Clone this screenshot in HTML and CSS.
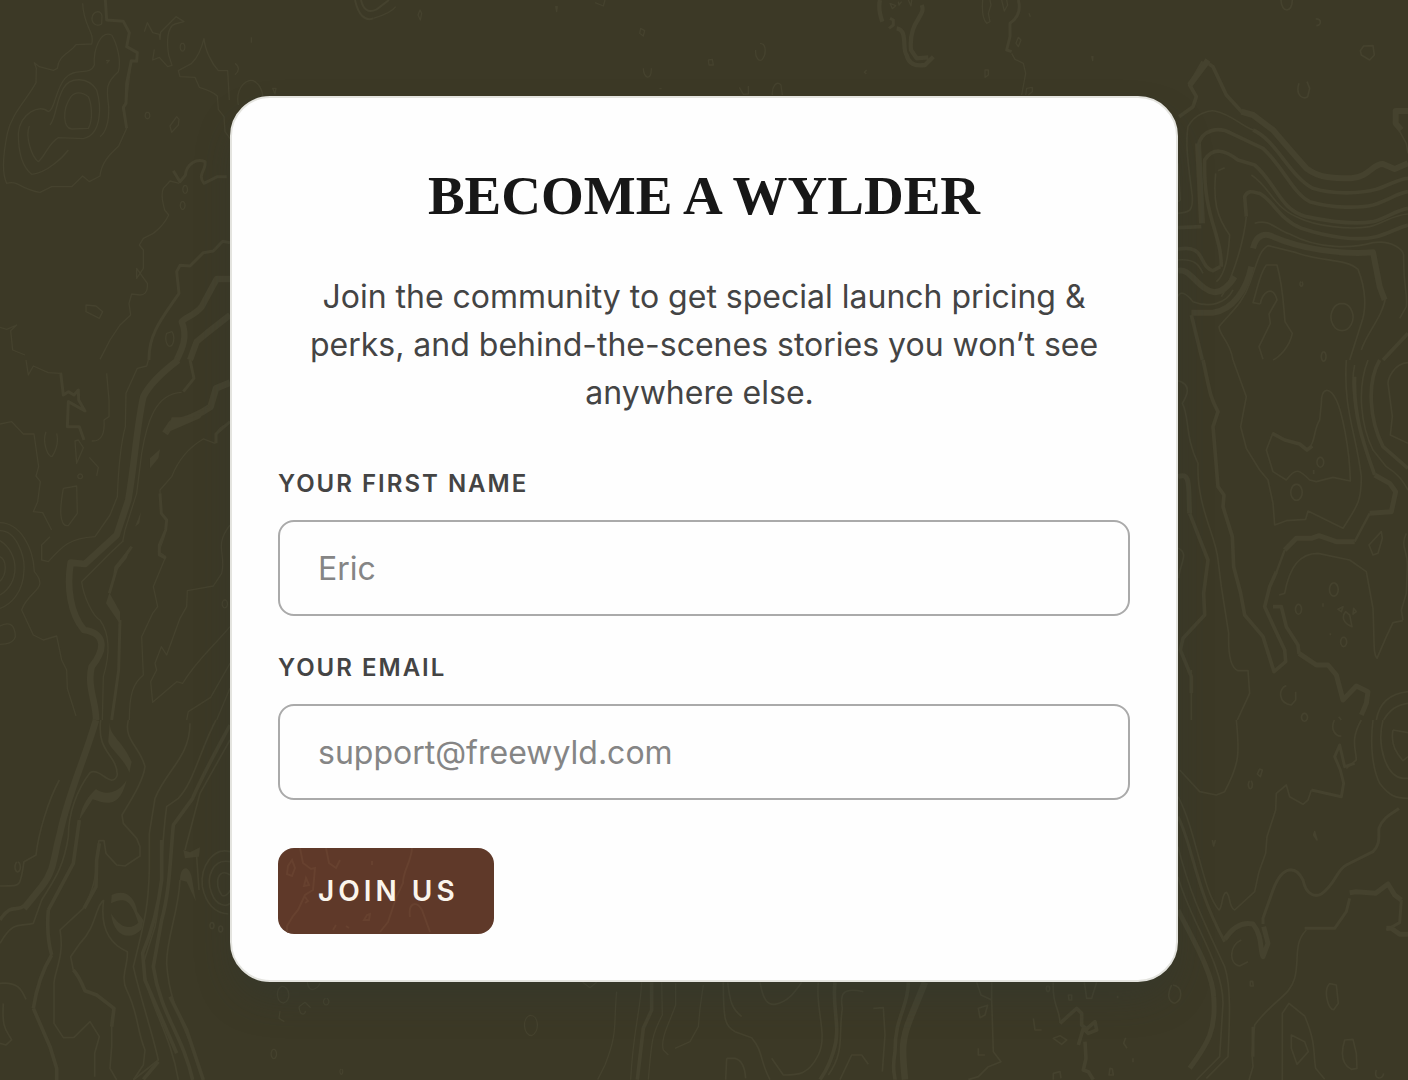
FILE: index.html
```html
<!DOCTYPE html>
<html lang="en">
<head>
<meta charset="utf-8">
<meta name="viewport" content="width=device-width, initial-scale=1">
<title>Become a Wylder</title>
<link rel="stylesheet" href="styles.css">
</head>
<body>
<svg class="contours" viewBox="0 0 1408 1080" preserveAspectRatio="xMidYMid slice" aria-hidden="true">
  <!-- west side, from north to south -->
  <g transform="scale(.33333)">
    <g stroke-width="4">
      <path d="M248 10C250 80 285 95 275 132L228 134C210 160 175 165 172 205L160 211L118 200L103 188L109 205L108 248C80 300 35 340 22 400C10 460 5 520 20 550Q35 545 50 551Q95 575 120 577L155 560L215 560L248 528L268 545L300 528C305 480 340 455 356 438L380 385L368 322L380 300L394 180"/>
      <path d="M335 105C300 90 280 150 283 195C270 230 225 200 195 235C165 270 165 330 145 335C120 310 60 340 55 400C55 450 65 500 95 523C140 520 190 470 205 450"/>
      <path d="M335 105C350 130 365 180 355 215C315 250 320 270 326 320C328 370 315 400 300 410"/>
      <path d="M88 378C75 410 95 470 115 485C135 470 145 430 175 413L250 416C305 405 305 320 290 270C265 230 210 230 190 265C165 310 170 350 150 375"/>
      <path d="M213 290C185 330 190 385 215 387L265 385C280 360 275 310 265 290C245 275 225 275 213 290Z"/>
      <path d="M276 54C280 30 305 30 306 48L305 72C290 82 275 70 276 54ZM318 182L328 181L320 190"/>
      <path d="M433 95L442 68L458 98L478 103L480 118L482 97L528 50L552 65L525 72C500 80 500 130 506 165L516 196L503 200L478 172L458 180L463 148"/>
      <path d="M545 130A7 12 0 1 0 550 130ZM440 337A7 10 0 1 0 445 337ZM510 378L530 350L537 358L535 375L515 397Z"/>
      <path d="M612 115Q600 165 575 190L535 212L540 230L585 232L598 262Q640 275 652 288L655 328L672 350L675 395L692 418M612 115C615 150 635 190 655 212H683L688 300"/>
      <path d="M538 550L510 543L490 565C480 590 490 610 494 630L506 645C490 680 465 695 460 700L430 715L418 735L430 750V805L410 835V805L442 850C445 880 430 885 420 885L395 882L387 910L392 945L360 975L330 1020L300 1078"/>
      <path d="M553 557A7 12 0 1 0 558 557ZM546 605A7 12 0 1 0 550 605ZM500 1000A12 24 0 1 0 516 995ZM258 915L288 918L308 935L298 955L258 935Z"/>
      <path d="M0 982L20 988L50 975L32 992L38 1050L75 1065"/>
    </g>
    <g stroke-width="9">
      <path d="M316 0L320 60L370 64L388 98L380 140L412 158L410 184L394 182L380 250L378 310L370 322L380 385"/>
      <path d="M690 728L668 724L640 753L610 758L570 798L540 796L530 815L537 880C490 950 445 1000 447 1080"/>
      <path d="M520 512L540 545L556 526C560 490 590 475 615 485C620 510 590 525 612 550L652 530L680 530"/>
    </g>
    <g stroke-width="19">
      <path d="M690 837H650L632 870L605 920C585 945 560 950 545 965C565 1010 545 1050 530 1080"/>
      <path d="M690 945L620 1000L590 1025L570 1080"/>
    </g>
  </g>
  <g transform="translate(0 360) scale(.33333)">
    <g stroke-width="4">
      <path d="M445 0L440 18L412 25L378 100L376 200C360 260 355 330 352 410L330 465L285 530C210 535 190 555 145 605L125 600V555L150 530"/>
      <path d="M0 192L35 185L70 222H102L116 320L108 348L121 365L113 425L100 455L128 458L155 510"/>
      <path d="M78 0L85 45L100 18L145 38L180 40M320 40L327 120V170L312 180C315 220 305 245 275 243"/>
      <path d="M138 215C125 250 145 290 156 290C175 260 175 240 170 220M225 243L230 310L250 263L235 240ZM190 385L230 378L232 460L205 497C175 500 180 440 190 385M268 292L295 322L290 348M240 342A7 7 0 1 0 241 342Z"/>
      <path d="M0 488C60 490 100 560 103 635C150 690 85 690 65 750L100 825L130 840L170 828L185 900L200 930L202 985L228 1068"/>
      <path d="M0 512C50 512 75 590 72 630C70 700 30 735 0 745M0 542C60 580 60 670 0 705M0 590C20 600 22 640 0 664M0 798C25 785 45 790 46 830C40 850 20 852 0 853"/>
      <path d="M370 542L330 580L245 665C250 710 280 770 300 780C335 830 325 900 310 950L307 1080"/>
      <path d="M545 97C465 100 440 190 425 280L410 400L375 510L368 545M690 190C650 200 650 220 645 250L610 237C570 260 535 300 515 350L480 390L482 460C510 480 500 520 475 575L497 590L460 680L473 740L458 760L425 830L430 945C400 970 388 1000 388 1080"/>
      <path d="M690 495C640 560 680 580 665 640L640 678L562 692L560 740L540 775L500 885L484 860L465 910L470 930L452 965L458 1027L530 965L548 970C590 900 640 860 690 800M672 720A8 12 0 1 0 677 720Z"/>
      <path d="M690 910L632 1012L565 1055L560 1080M690 985L650 1080"/>
    </g>
    <g stroke-width="9">
      <path d="M182 38L190 105L205 95L222 105L235 90L236 120L255 153L205 125L202 200L238 200L252 240"/>
      <path d="M570 0L582 55L550 95M690 185L648 222V250M480 400L484 460L500 480L497 510L478 555V585L498 595M360 780L356 930L335 1080M395 560L350 625L328 700"/>
    </g>
    <g stroke-width="20">
      <path d="M535 0Q455 60 430 110C410 200 405 300 385 420L350 525L255 612L212 608C200 680 210 760 252 810C320 820 315 870 275 920C260 980 290 1030 288 1080"/>
      <path d="M690 68L648 85L632 140C590 170 550 180 515 190L495 220"/>
    </g>
    <path class="fill" d="M480 268L450 295V325L475 295ZM423 455L405 500L418 490ZM393 558L343 620L340 643L380 595ZM328 698L318 730L360 792V755ZM515 172H580L630 135L600 175L500 218Z"/>
  </g>
  <g transform="translate(0 720) scale(.33333)">
    <g stroke-width="5">
      <path d="M302 0C290 100 350 100 352 165C335 210 300 140 270 158C230 210 205 280 205 350C190 450 155 490 125 540L100 610C60 620 40 600 0 670"/>
      <path d="M385 0C370 60 420 80 435 140C430 180 400 230 366 285L370 310L410 355L420 380V408L375 438L350 435L318 400L312 362H297L290 410C290 470 280 510 250 565L180 630C195 710 160 760 162 795V910L190 953L222 952L270 905L298 950L284 1000V1070"/>
      <path d="M570 10C570 110 500 150 465 235L448 340V450C445 550 440 580 400 740C420 830 455 930 475 1020L400 1080"/>
      <path d="M648 0C600 90 580 190 535 235L500 260C480 400 490 500 465 620L430 730C440 850 510 930 535 1080"/>
      <path d="M690 60L600 220L555 390M590 410L597 510M540 480C535 580 500 650 500 730C510 880 570 930 610 1080"/>
      <path d="M311 540C285 560 290 620 240 670L212 710L220 750L260 815M311 540C300 620 325 670 382 695C385 735 360 770 380 810C415 880 410 930 435 990L430 1035L400 1080M335 890V980L330 1045L350 1080"/>
      <path d="M0 498C60 495 60 510 72 425L108 405C115 340 145 240 178 180M0 790C55 785 65 810 78 838M10 850C5 930 20 930 35 960L18 975L0 970M52 426A8 15 0 1 0 54 426"/>
      <path d="M690 395C640 380 600 440 607 500C620 560 650 580 685 582M690 425C640 415 615 470 635 520C650 560 680 560 690 550M690 465C655 440 640 490 665 525C675 535 690 515 690 510M635 608A6 9 0 1 0 637 608ZM661 618A6 9 0 1 0 663 618Z"/>
    </g>
    <g stroke-width="11">
      <path d="M0 600C35 545 50 580 75 555M252 565L288 500L290 420L298 370M220 750Q235 765 255 812L290 825L342 865L335 920M100 865L150 980L170 1045V1080M155 705Q115 770 100 865M145 570C140 630 145 670 155 705M145 570L220 430L238 300"/>
      <path d="M690 15C650 90 600 180 578 235L520 315C510 420 510 510 485 600L460 740C480 880 550 950 578 1080M485 360L485 480Q470 600 428 700L435 780L530 1000M510 830L560 930L610 1080M475 1025L430 1078"/>
    </g>
    <path d="M288 0C250 130 205 220 180 340C160 410 165 450 125 500L72 565" stroke-width="20"/>
    <path class="fill" d="M330 0C325 50 360 50 395 125L388 158C370 110 320 80 325 60ZM288 207C320 230 360 215 380 180C360 260 325 255 278 238L238 300C245 250 270 225 288 207ZM335 525C375 505 405 530 412 575L430 600L425 628C390 665 340 650 333 580C370 640 400 620 415 608C390 530 370 535 333 550ZM550 390L570 397L600 382L597 410L555 415ZM540 480C540 440 565 430 575 470L588 545L560 485Z"/>
  </g>
  <!-- east side -->
  <g transform="translate(1173 0) scale(.33333)">
    <g stroke-width="5">
      <path d="M15 640C45 635 60 640 58 590C50 520 35 440 45 380C65 340 110 330 125 333C180 345 200 375 240 390"/>
      <path d="M180 1080C170 1020 140 1010 138 980C170 940 210 910 230 850C255 780 260 750 285 737L370 758C440 785 520 775 555 808C580 870 580 930 565 970L530 1080"/>
      <path d="M128 520C120 600 130 650 170 705C165 790 150 830 130 845M235 525C290 560 300 620 370 650C430 680 530 690 590 680C640 665 660 645 705 642M135 512L155 503M220 650C210 750 165 860 145 890M180 870C160 910 110 925 60 905C40 880 20 870 15 890"/>
      <path d="M245 670C290 655 310 690 350 702C440 750 540 745 600 728C660 720 690 750 692 765C690 860 705 880 700 920L680 955M638 890C630 950 580 1000 565 1050M262 912L240 908C255 860 260 820 280 795L312 795C330 860 330 900 336 965L358 1000C350 1040 320 1070 300 1080"/>
      <path d="M262 912C265 880 300 850 312 900L288 942L292 970L258 1040L270 1078M500 911A33 41 0 1 0 514 911ZM450 1056A7 14 0 1 0 454 1056ZM384 845A4 7 0 1 0 386 845M324 0C325 40 358 40 358 0M428 57C448 55 445 77 430 77M562 152L572 138L600 137L604 165L590 180L565 165ZM378 250C365 290 395 300 404 290L410 265L402 245M675 385L700 430L705 460M15 490L22 600L15 605M15 780C70 775 80 800 90 820"/>
    </g>
    <g stroke-width="11">
      <path d="M240 390C310 420 350 530 420 565C480 585 570 580 610 568C650 555 680 535 705 535"/>
      <path d="M75 440C85 385 140 380 175 400L270 445C330 500 360 580 410 605C480 625 560 625 600 615C650 600 670 580 705 575"/>
      <path d="M220 650L215 590C225 568 240 576 260 580C300 600 320 660 385 685C460 710 550 725 610 710C650 700 670 685 705 675"/>
      <path d="M145 800C145 700 90 650 95 480C120 440 155 450 195 480L245 495C310 550 320 630 400 650C470 665 540 675 600 665C640 655 670 630 705 625"/>
      <path d="M15 683L85 680M15 748C100 730 75 800 120 812L142 800M55 945L88 1080M705 1000L630 1080M105 190L120 200L160 285L210 340M90 185L50 255L70 290L60 320L18 350"/>
    </g>
    <g stroke-width="18">
      <path d="M105 180L95 195L50 255M205 335L240 345L300 390Q360 460 400 505C440 535 480 535 535 535C590 530 600 490 630 492L665 507L705 490M75 430L87 670M15 813C50 800 75 870 125 877C150 875 170 855 185 830M240 745C250 700 280 700 300 710C380 745 500 765 600 757L620 860L635 900M55 938H120C180 930 220 870 235 800M705 333H668V370L685 390"/>
    </g>
  </g>
  <g transform="translate(1173 360) scale(.33333)">
    <g stroke-width="5">
      <path d="M15 62C60 75 40 110 28 130C50 170 35 230 75 310C70 440 130 530 135 600L145 680L167 820C165 890 175 925 195 932H225L230 1000L193 1080"/>
      <path d="M180 0L220 110L203 200L220 265L260 330L285 360L300 430L305 495L340 482L398 478L405 453L510 505C550 440 565 430 565 350C550 220 510 150 520 0"/>
      <path d="M300 218L280 270L300 335L340 360C370 320 380 330 410 360L430 365L480 352L532 363C530 260 505 150 490 120C470 80 445 80 445 130L440 180C420 210 430 250 400 272"/>
      <path d="M545 15C530 80 550 170 570 240M585 0C550 90 565 200 600 270L640 320C680 345 690 365 705 390M705 8C660 10 645 60 645 70L658 170L652 225L705 250M318 705L335 700C350 620 380 580 435 580L530 600L580 635L600 745C605 860 600 880 612 895L640 830L660 788L690 782"/>
      <path d="M15 565C50 580 20 610 17 655M625 515L588 555L600 585L615 580L628 535ZM700 520C680 560 705 570 703 620L700 700L685 750L690 780M610 1080C620 1020 660 1000 705 995M632 1080C650 1050 670 1035 705 1030M55 930V1080M340 977C315 985 315 1030 355 1035L368 1020V995"/>
      <path d="M440 292A10 15 0 1 0 444 292ZM368 373A17 24 0 1 0 373 373ZM480 669A13 20 0 1 0 485 669ZM375 733A9 15 0 1 0 378 733ZM518 755C505 770 510 790 537 800L530 765ZM495 748L510 740L505 755ZM542 745L550 755L540 762ZM510 832A9 14 0 1 0 514 832ZM393 1060A9 12 0 1 0 396 1060ZM497 1070L505 1080M450 730V740M422 330V342M472 820V826"/>
    </g>
    <g stroke-width="11">
      <path d="M90 0C110 90 110 110 135 155L120 200L135 380L153 405L150 440L178 530L182 620L203 700L215 765L270 830L303 935L338 905L335 870L300 795L275 740L290 680L310 635"/>
      <path d="M298 220L335 240L380 252L402 270L418 258M545 50C540 170 575 260 605 345M620 0C580 70 590 180 630 260L705 325M50 460L105 600L92 700L95 765L30 835L22 870L55 950V1000M300 740H325L340 800L375 855L378 882"/>
    </g>
    <g stroke-width="15">
      <path d="M605 345L650 370L668 395L655 455L590 460M545 545H490L438 527L415 535H370L335 570M378 880L430 915H465L490 945L510 1020L550 978L585 995L580 1030L565 1065M15 350C55 335 45 380 50 460"/>
    </g>
    <path d="M590 460L545 545M335 570L310 638" stroke-width="7"/>
  </g>
  <g transform="translate(1173 720) scale(.33333)">
    <g stroke-width="5">
      <path d="M190 0C200 100 200 130 155 215L130 225L80 215L20 150M15 230C70 330 90 520 138 570C150 560 145 520 160 517C175 530 165 560 185 570L245 515L258 455L278 400L282 350L308 270L310 220L340 195L350 230L390 253L405 240L415 210"/>
      <path d="M400 630C360 670 380 720 365 775C350 830 300 840 245 915L237 1000L240 1040L228 1080"/>
      <path d="M600 0C590 80 600 150 620 190C650 230 670 235 705 235M630 0C610 80 640 170 690 175H705M660 30C650 80 680 110 690 122L705 110M660 30L705 38M565 0C530 60 550 90 550 120L520 145"/>
      <path d="M15 380C50 520 90 600 155 740C175 800 170 900 165 1010L100 1075M15 470C50 600 150 730 150 850L140 1010L70 1080M205 660C170 675 165 730 200 738L225 725M232 784V798H241L239 784ZM328 1080V880L348 850L395 888C430 970 420 1000 428 1045L455 1078M355 945L395 965L406 995L372 1033L355 985ZM470 791C450 810 465 870 482 869L496 850L490 795ZM515 960C500 1010 510 1035 535 1048L552 1045L550 1000L540 958ZM610 1050C600 1080 630 1080 632 1060M260 147L253 162L262 170L268 150ZM230 183A6 12 0 1 0 234 183M425 335L432 360L422 345ZM0 795C30 800 30 840 5 850M118 360L122 378L127 360M484 0C470 30 490 50 505 48"/>
    </g>
    <g stroke-width="9">
      <path d="M270 612V595L300 510C330 430 370 440 390 480C400 530 430 530 445 522C490 490 490 450 520 435L600 395C625 370 615 345 618 325C630 290 660 280 678 265"/>
      <path d="M415 210L505 230L512 190L502 150L485 110L500 75L515 140L545 130M530 535L520 575L485 625H395M640 630L680 608L685 540M240 920V1010M15 290C60 380 65 500 155 665"/>
    </g>
    <g stroke-width="15">
      <path d="M155 658C180 620 210 605 240 612C270 650 260 690 270 710L285 670L272 620M530 518L550 515L608 520L645 492L665 525L685 540M705 643H680L655 625H640M15 570C60 660 120 760 122 830C130 930 105 970 50 1045"/>
    </g>
  </g>
  <!-- below the card -->
  <g transform="translate(235 975) scale(.33333)" stroke-width="4">
    <path d="M140 34C120 45 125 82 145 84C170 80 165 32 140 34ZM217 20C220 60 250 40 255 25M192 95C195 130 215 115 210 108M192 95L210 82L227 98M272 70A8 10 0 1 0 275 70M135 108L132 130L148 140M115 223A8 14 0 1 0 118 223ZM318 282A4 8 0 1 0 320 282M885 121C860 130 865 182 890 182C915 170 912 120 885 121ZM1043 22L1065 38L1085 22"/>
    <path d="M1145 50C1135 150 1150 170 1110 270L1088 314M1220 22C1215 120 1195 160 1187 314M1280 22L1282 120C1250 180 1250 200 1240 314M1322 25V90C1305 140 1275 190 1285 225L1300 240M1405 30L1395 100L1390 155L1365 200L1320 220"/>
    <path stroke-width="11" d="M1250 22V105L1225 160L1207 314"/>
  </g>
  <g transform="translate(705 975) scale(.33333)" stroke-width="5">
    <path d="M55 22C55 140 60 150 90 170L140 188C175 230 165 260 195 314M68 22C75 80 80 100 110 125M165 22C175 80 190 90 210 88C250 80 270 50 290 22M340 22C330 100 370 180 340 240C310 300 280 300 235 300L200 250M475 50C410 35 405 60 412 100C400 180 420 230 370 300M65 250H90C110 255 120 280 122 310M65 250L62 314M405 314L440 240H470L490 268M505 100L535 98L540 180L532 290M815 22L828 60L860 75L860 22M860 75L865 230L888 260L850 275L820 305L790 314M850 90L820 100L825 128L840 120L848 90M820 220L820 240H840M1045 22C1040 90 1065 100 1065 145M1138 22L1145 70H1160L1175 22M1090 60L1092 75H1100L1100 60ZM1028 32A5 9 0 1 0 1030 32M985 130L990 165H1010M1045 190L1065 182L1085 195L1070 208ZM1262 188L1256 205L1266 220M1284 250V262M1215 280L1212 300H1225L1222 282ZM1045 314L1045 295L1065 290L1068 310M1238 62V70M1400 30C1385 60 1390 80 1410 85"/>
    <path stroke-width="11" d="M390 22C380 100 410 160 385 230C370 280 360 290 345 314M610 22C610 100 570 120 570 230C560 290 570 300 570 314M1065 145L1115 100L1130 115V150L1145 162L1170 140L1175 165L1150 175L1135 160L1120 210M1140 200L1143 250L1135 285L1150 290L1165 314"/>
    <path stroke-width="20" d="M660 22L620 120C590 190 590 220 600 314"/>
  </g>
  <!-- above the card -->
  <g transform="translate(235 0) scale(.33333)" stroke-width="4">
    <path stroke-width="6" d="M360 0C370 45 390 65 415 55M378 0C385 30 400 40 425 28L462 0"/>
    <path d="M415 55C450 45 475 30 482 20M555 30L549 45L556 60L560 40ZM962 20L965 35L967 20ZM1080 8L1105 18L1110 0M1217 85L1214 100L1225 108L1229 92ZM1225 205C1225 235 1250 245 1249 205M49 112V128M0 190C15 200 12 215 0 224M10 315C0 260 40 230 60 245C75 255 82 275 84 290M113 265L120 282L123 265ZM1273 266H1280"/>
  </g>
  <g transform="translate(705 0) scale(.33333)" stroke-width="4">
    <path d="M152 150C150 170 160 185 170 180C185 165 185 130 165 130M10 180L12 195L25 195L22 178ZM202 285C200 260 215 240 228 255L232 285M103 262L115 283L130 282V258M485 210L478 217L484 222M555 10L572 17L562 26ZM580 5L582 15L590 5M610 0L618 18L620 0M833 0C830 40 835 60 845 70L855 65L850 40L858 15L855 0M890 0L898 33L908 15L905 0M940 112L933 130L940 140L948 120ZM840 210L840 232L850 225V210ZM972 40L976 50M1160 168L1163 182L1164 168M920 160L930 178L955 190L962 220L950 285M962 285L965 265L982 262L982 275L970 285"/>
    <path stroke-width="9" d="M940 0C950 40 930 60 915 70V110L905 150L920 155M555 55L565 60V75L552 85"/>
    <path stroke-width="13" d="M525 0C520 20 525 45 532 65M575 85C610 90 590 150 605 165C610 190 630 200 660 195L685 170M650 15C665 50 610 60 618 150L635 175L670 172"/>
  </g>
</svg>

<main class="page">
  <section class="card" aria-labelledby="join-title">
    <h1 class="title" id="join-title">BECOME A WYLDER</h1>
    <p class="intro">Join the community to get special launch pricing &amp; perks, and behind-the-scenes stories you won’t see anywhere else.&nbsp;</p>
    <form class="form">
      <div class="field">
        <label class="label" for="first-name">YOUR FIRST NAME</label>
        <input class="input" id="first-name" type="text" placeholder="Eric">
      </div>
      <div class="field">
        <label class="label" for="email">YOUR EMAIL</label>
        <input class="input" id="email" type="email" placeholder="support@freewyld.com">
      </div>
      <button class="submit" type="submit">
        <svg class="submit-lines" viewBox="0 0 216 86" preserveAspectRatio="xMinYMid slice" aria-hidden="true">
          <path d="M10 18L14 12L17 20L14 28L9 26ZM22 0L25 15L33 21L37 20L35 42L27 47L20 62L15 68L9 78V86M28 30L31 37L26 38ZM27 49L30 53L27 55M48 0L51 15L58 20L62 12M94 13V17M134 0C133 15 125 22 125 35L118 50L110 74L102 84M86 72L89 67L92 66L91 72ZM132 69C130 55 138 52 144 62L152 84M55 82L58 77M68 78L71 80"/>
        </svg>
        <span class="submit-text">JOIN US</span>
      </button>
    </form>
  </section>
</main>
</body>
</html>
```
FILE: styles.css
```css
* {
  box-sizing: border-box;
}

body {
  position: relative;
  min-height: 100vh;
  margin: 0;
  overflow-x: hidden;
  background: #3c3926;
  color: #444;
  font-family: Inter, "Liberation Sans", sans-serif;
}

/* Topographic map lines behind the page */
.contours {
  position: absolute;
  inset: 0;
  width: 100%;
  height: 100%;
  fill: none;
  stroke: #45422e;
  stroke-linejoin: round;
}

.contours .fill {
  fill: #45422e;
  stroke: none;
}

.page {
  position: relative;
  padding: 96px 24px;
}

.card {
  max-width: 948px;
  margin: 0 auto;
  padding: 54px 46px 46px;
  border: 2px solid #e4e4df;
  border-radius: 40px;
  background: #fefefe;
  box-shadow: 0 20px 40px -8px rgba(46, 56, 52, 0.4);
}

.title {
  margin: 0 0 33px;
  color: #171717;
  font-family: "Liberation Serif", serif;
  font-size: 55px;
  font-weight: 700;
  line-height: 88px;
  text-align: center;
}

.intro {
  margin: 0 0 51px;
  font-size: 32px;
  line-height: 48px;
  text-align: center;
}

.form {
  display: flex;
  flex-direction: column;
  align-items: flex-start;
  gap: 36px;
}

.field {
  display: flex;
  flex-direction: column;
  gap: 20px;
  width: 100%;
}

.label {
  font-size: 24px;
  font-weight: 600;
  line-height: 32px;
  letter-spacing: 2px;
}

.input {
  width: 100%;
  height: 96px;
  padding: 0 38px;
  border: 2px solid #aaa;
  border-radius: 16px;
  background: #fefefe;
  color: #444;
  font: 400 32px Inter, "Liberation Sans", sans-serif;
}

.input::placeholder {
  color: #858585;
  opacity: 1;
}

.submit {
  position: relative;
  margin-top: 12px;
  padding: 25px 35px 25px 40px;
  overflow: hidden;
  border: 0;
  border-radius: 16px;
  background: #5f3929;
  color: #faf5ec;
  font: 600 28px/36px Inter, "Liberation Sans", sans-serif;
  letter-spacing: 4px;
}

.submit-lines {
  position: absolute;
  inset: 0;
  width: 100%;
  height: 100%;
  fill: none;
  stroke: #67412f;
  stroke-width: 2;
}

.submit-text {
  position: relative;
}
```
